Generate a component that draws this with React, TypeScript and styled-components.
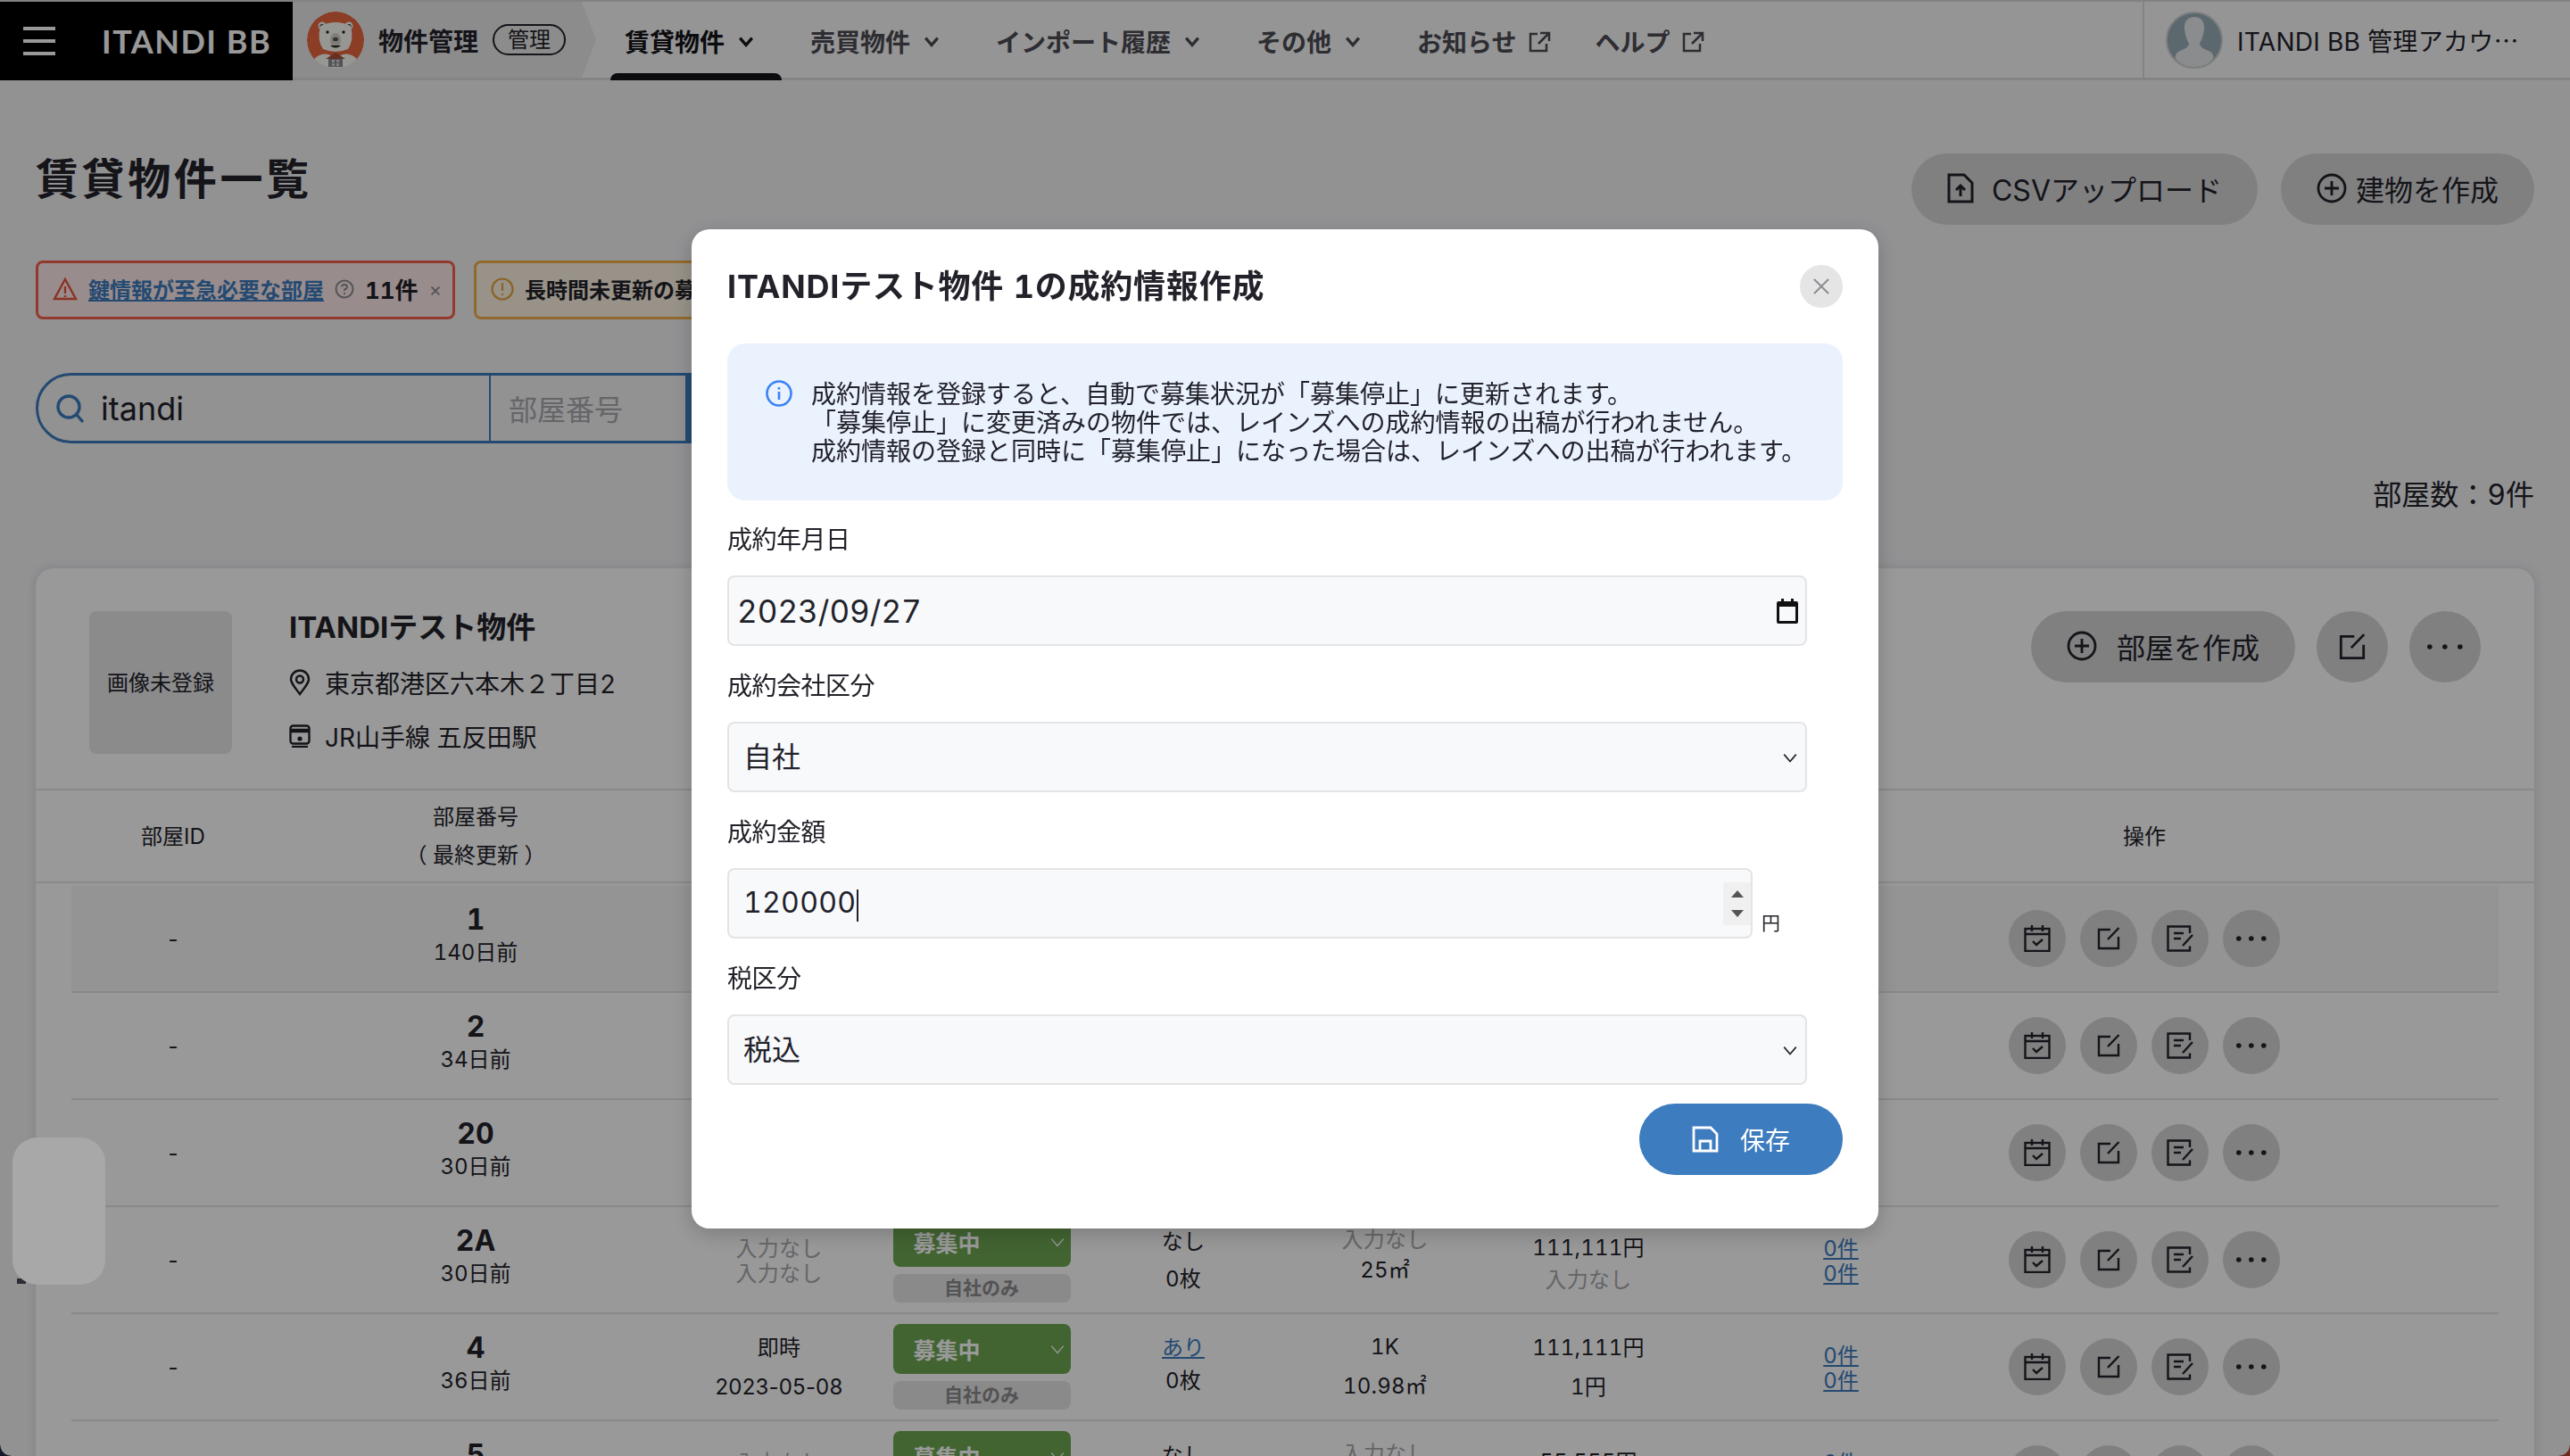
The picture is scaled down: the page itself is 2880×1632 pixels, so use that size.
import React from 'react';
import styled, { createGlobalStyle } from 'styled-components';

const GlobalStyle = createGlobalStyle`
  html, body {
    margin: 0;
    height: 1632px;
    overflow: hidden;
    background: #f3f3f6;
    color: #22222a;
    font-family: 'Inter', 'Noto Sans CJK JP', sans-serif;
    font-variant-numeric: tabular-nums;
  }
  * {
    box-sizing: border-box;
  }
`;

const colors = {
  text: '#22222a',
  blue: '#3c7cbf',
  line: '#e4e4e6',
  button: '#d6d6d8',
  muted: '#a9a9ad',
};

const TopStrip = styled.div`
  height: 2px;
  background: #d9d9d9;
`;

const Header = styled.header`
  display: flex;
  height: 88px;
  background: #f8f8f8;
  border-bottom: 3px solid #dcdcdc;
`;

const LogoBlock = styled.div`
  display: flex;
  align-items: center;
  width: 328px;
  height: 88px;
  padding-left: 26px;
  background: #000;
`;

const Burger = styled.div`
  display: flex;
  flex-direction: column;
  gap: 10px;
  width: 36px;
  margin-right: 52px;
  span {
    height: 4px;
    background: #fff;
  }
`;

const Logo = styled.div`
  font-family: 'Lato', sans-serif;
  font-size: 36px;
  font-weight: 700;
  letter-spacing: 1.5px;
  color: #fff;
  white-space: nowrap;
`;

const ProductBlock = styled.div`
  position: relative;
  display: flex;
  align-items: center;
  gap: 16px;
  width: 340px;
  padding-left: 16px;
  background: #eaeaea;
  clip-path: polygon(0 0, 95.3% 0, 100% 50%, 95.3% 100%, 0 100%);
`;

const ProductName = styled.span`
  font-size: 28px;
  font-weight: 700;
  white-space: nowrap;
`;

const RoleBadge = styled.span`
  display: flex;
  align-items: center;
  justify-content: center;
  width: 82px;
  height: 35px;
  border: 2px solid ${colors.text};
  border-radius: 18px;
  font-size: 24px;
  line-height: 1;
`;

const Nav = styled.nav`
  display: flex;
  flex: 1;
  gap: 16px;
  padding-left: 16px;
`;

const NavItem = styled.div<{ $active?: boolean; $external?: boolean }>`
  position: relative;
  display: flex;
  align-items: center;
  gap: ${(p) => (p.$external ? '13px' : '15px')};
  height: 88px;
  padding: 0 ${(p) => (p.$external ? '18px' : '31px')} 0 16px;
  font-size: 28px;
  font-weight: 700;
  white-space: nowrap;
  color: ${(p) => (p.$active ? '#14141a' : '#4c4c54')};
  ${(p) =>
    p.$active &&
    `
    &::after {
      content: '';
      position: absolute;
      left: 0;
      right: 0;
      bottom: 0;
      height: 8px;
      border-radius: 8px 8px 0 0;
      background: #14141a;
    }
  `}
`;

const Account = styled.div`
  display: flex;
  align-items: center;
  gap: 16px;
  width: 479px;
  padding-left: 24px;
  border-left: 2px solid #dcdcdc;
  font-size: 28px;
  letter-spacing: 0.3px;
  white-space: nowrap;
`;

const CjkEllipsis = styled.span`
  font-family: 'Noto Sans CJK JP', sans-serif;
`;

const Main = styled.main`
  padding: 0 40px;
`;

const TitleRow = styled.div`
  display: flex;
  align-items: center;
  justify-content: space-between;
  height: 80px;
  margin-top: 82px;
`;

const PageTitle = styled.h1`
  margin: 0 0 30px;
  font-size: 48px;
  font-weight: 700;
  letter-spacing: 3.6px;
`;

const TitleActions = styled.div`
  display: flex;
  gap: 26px;
`;

const PillButton = styled.button<{ $gap?: number }>`
  display: flex;
  align-items: center;
  gap: ${(p) => p.$gap ?? 10}px;
  height: 80px;
  padding: 0 40px 3px;
  border: none;
  border-radius: 40px;
  background: ${colors.button};
  color: ${colors.text};
  font-family: inherit;
  font-size: 32px;
  white-space: nowrap;
`;

const RoundButton = styled.button<{ $size: number }>`
  display: flex;
  align-items: center;
  justify-content: center;
  width: ${(p) => p.$size}px;
  height: ${(p) => p.$size}px;
  padding: 0;
  border: none;
  border-radius: 50%;
  background: ${colors.button};
  color: ${colors.text};
`;

const NoticeRow = styled.div`
  display: flex;
  gap: 21px;
  margin-top: 40px;
`;

const Notice = styled.div<{ $tone: 'red' | 'orange' }>`
  display: flex;
  align-items: center;
  gap: 12px;
  height: 66px;
  padding: 0 12px 3px 16px;
  border: 3px solid ${(p) => (p.$tone === 'red' ? '#f4614c' : '#f4b04c')};
  border-radius: 8px;
  background: ${(p) => (p.$tone === 'red' ? '#ffeaea' : '#fdf4e3')};
  font-size: 24px;
  font-weight: 700;
  white-space: nowrap;
`;

const NoticeLink = styled.a`
  color: ${colors.blue};
  text-decoration: underline;
`;

const NoticeCount = styled.span`
  font-size: 26px;
`;

const NoticeClose = styled.span`
  font-size: 22px;
  font-weight: 400;
  color: #8c8c92;
`;

const SearchBar = styled.div`
  display: flex;
  width: 1100px;
  height: 79px;
  margin-top: 60px;
  border: 3px solid ${colors.blue};
  border-radius: 40px 0 0 40px;
  background: #f3f3f6;
`;

const SearchKeyword = styled.div`
  display: flex;
  align-items: center;
  gap: 18px;
  width: 507px;
  padding-left: 19px;
  border-right: 2px solid ${colors.blue};
  font-size: 36px;
`;

const SearchRoom = styled.div`
  display: flex;
  align-items: center;
  width: 218px;
  padding: 0 0 2px 20px;
  font-size: 32px;
  color: ${colors.muted};
`;

const SearchSubmit = styled.div`
  flex: 1;
  background: ${colors.blue};
`;

const RoomCount = styled.div`
  margin-top: 34px;
  font-size: 32px;
  line-height: 48px;
  text-align: right;
`;

const Card = styled.section`
  margin-top: 58px;
  border-radius: 20px 20px 0 0;
  background: #fff;
  box-shadow: 0 0 12px rgba(0, 0, 0, 0.12);
`;

const CardHead = styled.div`
  display: flex;
  align-items: flex-start;
  height: 249px;
  padding: 48px 60px 0 60px;
  border-bottom: 2px solid ${colors.line};
`;

const Thumb = styled.div`
  display: flex;
  align-items: center;
  justify-content: center;
  width: 160px;
  height: 160px;
  margin-right: 64px;
  padding-bottom: 4px;
  border-radius: 8px;
  background: #e8e8ea;
  font-size: 24px;
`;

const BuildingInfo = styled.div`
  flex: 1;
  margin-top: -2px;
`;

const BuildingName = styled.div`
  font-size: 33px;
  font-weight: 700;
  line-height: 40px;
  margin-bottom: 12px;
`;

const InfoLine = styled.div`
  display: flex;
  align-items: center;
  gap: 16px;
  height: 60px;
  font-size: 28px;
`;

const CardActions = styled.div`
  display: flex;
  gap: 24px;
`;

const GridRow = styled.div<{ $head?: boolean; $shade?: boolean }>`
  display: grid;
  grid-template-columns: 226px 452px 228px 226px 226px 226px 230px 336px 344px 1fr;
  align-items: center;
  height: ${(p) => (p.$head ? '104px' : '120px')};
  margin: 0 ${(p) => (p.$head ? '0 3px' : '40px')};
  padding-left: ${(p) => (p.$head ? '41px' : '1px')};
  border-bottom: 2px solid ${colors.line};
  background: ${(p) => (p.$shade ? '#f7f7f7' : 'transparent')};
  text-align: center;
  font-size: 24px;
`;

const HeadCell = styled.div`
  line-height: 43px;
`;

const Stack = styled.div<{ $lh?: number; $shift?: number }>`
  line-height: ${(p) => p.$lh ?? 44}px;
  margin-top: ${(p) => p.$shift ?? 0}px;
`;

const Line = styled.div<{ $muted?: boolean; $date?: boolean }>`
  color: ${(p) => (p.$muted ? colors.muted : 'inherit')};
  letter-spacing: 0.2px;
  font-variant-numeric: ${(p) => (p.$date ? 'normal' : 'tabular-nums')};
`;

const LinkLine = styled.a`
  display: block;
  color: ${colors.blue};
  text-decoration: underline;
`;

const RoomCell = styled.div`
  margin-bottom: 6px;
`;

const RoomNo = styled.div`
  font-size: 32px;
  font-weight: 700;
  line-height: 38px;
`;

const RoomAgo = styled.div`
  line-height: 36px;
`;

const StatusCell = styled.div`
  display: flex;
  flex-direction: column;
  align-items: center;
  gap: 8px;
`;

const StatusSelect = styled.div`
  display: flex;
  align-items: center;
  justify-content: space-between;
  width: 199px;
  height: 56px;
  padding: 0 6px 0 23px;
  border-radius: 8px;
  background: #6ea753;
  color: #fff;
  font-size: 25px;
  font-weight: 700;
`;

const StatusScope = styled.div`
  width: 199px;
  height: 32px;
  border-radius: 8px;
  background: #e6e6e6;
  color: #8a8a8e;
  font-size: 21px;
  font-weight: 700;
  line-height: 32px;
`;

const RowActions = styled.div`
  display: flex;
  justify-content: center;
  gap: 16px;
`;

const Backdrop = styled.div`
  position: fixed;
  inset: 0;
  display: flex;
  justify-content: center;
  padding-top: 257px;
  background: rgba(0, 0, 0, 0.4);
`;

const Modal = styled.div`
  width: 1330px;
  height: 1120px;
  padding: 0 40px;
  border-radius: 20px;
  background: #fff;
  box-shadow: 0 6px 24px rgba(0, 0, 0, 0.2);
`;

const ModalHead = styled.div`
  display: flex;
  align-items: center;
  justify-content: space-between;
  height: 128px;
`;

const ModalTitle = styled.h2`
  margin: 0 0 6px;
  font-size: 36px;
  font-weight: 700;
  letter-spacing: 0.8px;
`;

const CloseButton = styled.button`
  display: flex;
  align-items: center;
  justify-content: center;
  width: 48px;
  height: 48px;
  padding: 0;
  border: none;
  border-radius: 50%;
  background: #e5e5e5;
  color: #8c8c92;
`;

const InfoBox = styled.div`
  display: flex;
  gap: 21px;
  height: 176px;
  margin-bottom: 24px;
  padding: 41px 20px 41px 43px;
  border-radius: 20px;
  background: #eaf2fe;
  font-size: 28px;
  line-height: 32px;
  white-space: nowrap;
`;

const Field = styled.div`
  margin-bottom: 25px;
`;

const Label = styled.label`
  display: block;
  margin-bottom: 20px;
  font-size: 28px;
  line-height: 40px;
  letter-spacing: -0.5px;
`;

const Control = styled.div<{ $pad?: number; $width?: number }>`
  position: relative;
  display: flex;
  align-items: center;
  justify-content: space-between;
  width: ${(p) => p.$width ?? 1210}px;
  height: 79px;
  padding: 0 8px 0 ${(p) => p.$pad ?? 16}px;
  border: 2px solid #e4e4e6;
  border-radius: 8px;
  background: #f8f9fb;
  font-size: 32px;
`;

const SelectValue = styled.span`
  margin-bottom: 6px;
`;

const DateText = styled.span`
  font-size: 35px;
`;

const AmountText = styled.span`
  letter-spacing: 0.3px;
`;

const Caret = styled.span`
  display: inline-block;
  width: 2px;
  height: 36px;
  margin-left: 1px;
  vertical-align: middle;
  background: ${colors.text};
`;

const AmountRow = styled.div`
  display: flex;
  align-items: flex-end;
  gap: 10px;
`;

const Unit = styled.span`
  font-size: 21px;
  line-height: 30px;
  padding-bottom: 2px;
`;

const Spinner = styled.div`
  display: flex;
  flex-direction: column;
  align-items: center;
  justify-content: center;
  gap: 14px;
  width: 31px;
  height: 48px;
  margin-right: -8px;
  background: #f0f0f0;
`;

const Foot = styled.div`
  display: flex;
  justify-content: flex-end;
  margin-top: -4px;
`;

const SaveButton = styled.button`
  display: flex;
  align-items: center;
  justify-content: center;
  gap: 24px;
  width: 228px;
  height: 80px;
  border: none;
  border-radius: 40px;
  background: ${colors.blue};
  color: #fff;
  font-family: inherit;
  font-size: 28px;
`;

const EdgeNub = styled.div`
  position: fixed;
  left: 19px;
  top: 1433px;
  width: 10px;
  height: 6px;
  background: #2c2c34;
`;

const FloatingTab = styled.div`
  position: fixed;
  left: 14px;
  top: 1275px;
  width: 104px;
  height: 165px;
  border-radius: 28px;
  background: #a8a8a8;
`;

const Corner = styled.div<{ $side: 'left' | 'right' }>`
  position: fixed;
  bottom: 0;
  ${(p) => p.$side}: 0;
  width: 12px;
  height: 12px;
  background: radial-gradient(
    circle at ${(p) => (p.$side === 'left' ? '100% 0' : '0 0')},
    transparent 11px,
    ${(p) => (p.$side === 'left' ? '#141828' : '#6e2a20')} 12px
  );
`;

const Chevron = ({ size = 18, width = 3 }: { size?: number; width?: number }) => (
  <svg width={size} height={size} viewBox="0 0 16 16" fill="none" stroke="currentColor" strokeWidth={width}>
    <path d="M2 5l6 7 6-7" />
  </svg>
);

const ExternalIcon = () => (
  <svg width="25" height="25" viewBox="0 0 25 25" fill="none" stroke="#4c4c54" strokeWidth="2.5">
    <path d="M10 4H2v19h18v-8" />
    <path d="M13 3h10v9M23 3L11 15" />
  </svg>
);

const EditIcon = ({ size = 26 }: { size?: number }) => (
  <svg width={size} height={size} viewBox="0 0 26 26" fill="none" stroke="currentColor" strokeWidth="2.4">
    <path d="M15 3H2v21h22V11" />
    <path d="M12 14L24.5 1" />
  </svg>
);

const CalendarCheckIcon = () => (
  <svg width="30" height="30" viewBox="0 0 30 30" fill="none" stroke="currentColor" strokeWidth="2.4">
    <rect x="1.5" y="4" width="27" height="25" />
    <path d="M1.5 10h27M9 0v7M21 0v7" />
    <path d="M10 18l4 4 7-6" />
  </svg>
);

const NoteEditIcon = () => (
  <svg width="30" height="30" viewBox="0 0 30 30" fill="none" stroke="currentColor" strokeWidth="2.4">
    <path d="M26 9V1.5H1.5v27H26v-5" />
    <path d="M8 9h11M8 15h8M18 23L29 11" />
  </svg>
);

const DotsIcon = ({ gap = 14, r = 2.8 }: { gap?: number; r?: number }) => (
  <svg width={gap * 2 + r * 2 + 2} height="12" viewBox={`0 0 ${gap * 2 + r * 2 + 2} 12`} fill="currentColor">
    <circle cx={r + 1} cy="6" r={r} />
    <circle cx={r + 1 + gap} cy="6" r={r} />
    <circle cx={r + 1 + gap * 2} cy="6" r={r} />
  </svg>
);

const PlusCircleIcon = ({ size = 34 }: { size?: number }) => (
  <svg width={size} height={size} viewBox="0 0 34 34" fill="none" stroke="currentColor" strokeWidth="2.8">
    <circle cx="17" cy="17" r="15" />
    <path d="M17 9v16M9 17h16" />
  </svg>
);

const BearAvatar = () => (
  <svg width="64" height="64" viewBox="0 0 64 64">
    <defs>
      <clipPath id="bear-clip">
        <circle cx="32" cy="32" r="32" />
      </clipPath>
    </defs>
    <g clipPath="url(#bear-clip)">
      <circle cx="32" cy="32" r="32" fill="#e8663f" />
      <circle cx="17" cy="16" r="4.5" fill="#fbfbf5" />
      <circle cx="47" cy="16" r="4.5" fill="#fbfbf5" />
      <circle cx="17" cy="16.5" r="2.6" fill="#222" />
      <circle cx="47" cy="16.5" r="2.6" fill="#222" />
      <path d="M15 16Q32 8 49 16Q53 32 46 42Q32 48 18 42Q11 32 15 16Z" fill="#fbfbf5" />
      <path d="M9 52Q16 46 24 48L32 52L40 48Q48 46 55 52L60 64H4Z" fill="#fbfbf5" />
      <circle cx="23" cy="23" r="1.7" fill="#222" />
      <circle cx="41" cy="23" r="1.7" fill="#222" />
      <ellipse cx="32" cy="32" rx="6" ry="8" fill="#d6d3c9" />
      <ellipse cx="32" cy="31" rx="3" ry="2.2" fill="#555" />
      <path d="M26 38Q32 43 38 38Z" fill="#222" />
      <path d="M21 53L32 46L43 53H40V62H24V53Z" fill="#a8503a" />
      <rect x="24" y="53" width="16" height="9" fill="#8c8c90" />
      <path d="M28 54h3v3h-3zM33 54h3v3h-3zM28 58h3v3h-3zM33 58h3v3h-3z" fill="#d6d6da" />
    </g>
  </svg>
);

const ProfileAvatar = () => (
  <svg width="64" height="64" viewBox="0 0 64 64">
    <circle cx="32" cy="32" r="31" fill="#98adb8" stroke="#cfd2d4" strokeWidth="2" />
    <path
      d="M32 6C24 6 20 12 21 20C22 28 24 32 26 36C25 41 20 42 14 45C11 47 10 50 11 53C16 59 24 62 32 62C40 62 48 59 53 53C54 50 53 47 50 45C44 42 39 41 38 36C40 32 42 28 43 20C44 12 40 6 32 6Z"
      fill="#e6e9eb"
    />
  </svg>
);

const SearchIcon = () => (
  <svg width="33" height="33" viewBox="0 0 33 33" fill="none" stroke={colors.blue} strokeWidth="3.4">
    <circle cx="15" cy="15" r="12" />
    <path d="M24 24l7 8" />
  </svg>
);

const rooms = [
  { no: '1', ago: '140日前', shade: true, avail: ['入力なし', '入力なし'], keys: ['なし', '0枚'], area: ['1K', '25㎡'], rent: ['111,111円', '入力なし'] },
  { no: '2', ago: '34日前', avail: ['入力なし', '入力なし'], keys: ['なし', '0枚'], area: ['1K', '25㎡'], rent: ['111,111円', '入力なし'] },
  { no: '20', ago: '30日前', avail: ['入力なし', '入力なし'], keys: ['なし', '0枚'], area: ['1K', '25㎡'], rent: ['111,111円', '入力なし'] },
  { no: '2A', ago: '30日前', avail: ['入力なし', '入力なし'], keys: ['なし', '0枚'], area: ['入力なし', '25㎡'], rent: ['111,111円', '入力なし'] },
  { no: '4', ago: '36日前', avail: ['即時', '2023-05-08'], keys: ['あり', '0枚'], area: ['1K', '10.98㎡'], rent: ['111,111円', '1円'] },
  { no: '5', ago: '30日前', avail: ['入力なし', '入力なし'], keys: ['なし', '0枚'], area: ['入力なし', '25㎡'], rent: ['55,555円', '入力なし'] },
];

const isEmpty = (v: string) => v === '入力なし';

const App: React.FC = () => {
  return (
    <>
      <GlobalStyle />
      <TopStrip />
      <Header>
        <LogoBlock>
          <Burger>
            <span />
            <span />
            <span />
          </Burger>
          <Logo>ITANDI BB</Logo>
        </LogoBlock>
        <ProductBlock>
          <BearAvatar />
          <ProductName>物件管理</ProductName>
          <RoleBadge>管理</RoleBadge>
        </ProductBlock>
        <Nav>
          <NavItem $active>
            賃貸物件
            <Chevron />
          </NavItem>
          <NavItem>
            売買物件
            <Chevron />
          </NavItem>
          <NavItem>
            インポート履歴
            <Chevron />
          </NavItem>
          <NavItem>
            その他
            <Chevron />
          </NavItem>
          <NavItem $external>
            お知らせ
            <ExternalIcon />
          </NavItem>
          <NavItem $external>
            ヘルプ
            <ExternalIcon />
          </NavItem>
        </Nav>
        <Account>
          <ProfileAvatar />
          <span>
            ITANDI BB 管理アカウ<CjkEllipsis>…</CjkEllipsis>
          </span>
        </Account>
      </Header>

      <Main>
        <TitleRow>
          <PageTitle>賃貸物件一覧</PageTitle>
          <TitleActions>
            <PillButton $gap={20}>
              <svg width="30" height="34" viewBox="0 0 30 34" fill="none" stroke="currentColor" strokeWidth="3">
                <path d="M2 2h17l9 9v21H2z" />
                <path d="M15 26V14M10 19l5-5 5 5" />
              </svg>
              CSVアップロード
            </PillButton>
            <PillButton>
              <PlusCircleIcon />
              建物を作成
            </PillButton>
          </TitleActions>
        </TitleRow>

        <NoticeRow>
          <Notice $tone="red">
            <svg width="28" height="28" viewBox="0 0 28 28" fill="none" stroke="#e8533f" strokeWidth="2.4">
              <path d="M14 3L26 25H2Z" />
              <path d="M14 11v8M14 21v2" />
            </svg>
            <NoticeLink>鍵情報が至急必要な部屋</NoticeLink>
            <svg width="22" height="22" viewBox="0 0 22 22" fill="none" stroke="#8c8c92" strokeWidth="2">
              <circle cx="11" cy="11" r="9.5" />
              <path d="M8 8.5Q8 6 11 6Q14 6 14 8.5Q14 10.5 11 11.5V13M11 15v2" />
            </svg>
            <NoticeCount>11件</NoticeCount>
            <NoticeClose>×</NoticeClose>
          </Notice>
          <Notice $tone="orange">
            <svg width="26" height="32" viewBox="0 0 26 26" fill="none" stroke="#e8a53f" strokeWidth="2.2">
              <circle cx="13" cy="13" r="11.5" />
              <path d="M13 6v9M13 18v2" />
            </svg>
            長時間未更新の募集中の部屋
          </Notice>
        </NoticeRow>

        <SearchBar>
          <SearchKeyword>
            <SearchIcon />
            itandi
          </SearchKeyword>
          <SearchRoom>部屋番号</SearchRoom>
          <SearchSubmit />
        </SearchBar>

        <RoomCount>部屋数：9件</RoomCount>

        <Card>
          <CardHead>
            <Thumb>画像未登録</Thumb>
            <BuildingInfo>
              <BuildingName>ITANDIテスト物件</BuildingName>
              <InfoLine>
                <svg width="24" height="30" viewBox="0 0 24 30" fill="none" stroke="currentColor" strokeWidth="2.4">
                  <path d="M12 28C5 19 2 15 2 11.5A10 10 0 0 1 22 11.5C22 15 19 19 12 28Z" />
                  <circle cx="12" cy="11.5" r="4" />
                </svg>
                東京都港区六本木２丁目2
              </InfoLine>
              <InfoLine>
                <svg width="24" height="26" viewBox="0 0 24 26" fill="none" stroke="currentColor" strokeWidth="2.4">
                  <rect x="1.5" y="1.5" width="21" height="20" rx="3" />
                  <path d="M1.5 8h21M1.5 6h21" />
                  <path d="M3 25h18" />
                  <circle cx="12" cy="16" r="1.4" fill="currentColor" />
                </svg>
                JR山手線 五反田駅
              </InfoLine>
            </BuildingInfo>
            <CardActions>
              <PillButton $gap={22}>
                <PlusCircleIcon />
                部屋を作成
              </PillButton>
              <RoundButton $size={80}>
                <EditIcon size={30} />
              </RoundButton>
              <RoundButton $size={80}>
                <DotsIcon gap={17} />
              </RoundButton>
            </CardActions>
          </CardHead>

          <GridRow $head>
            <HeadCell>部屋ID</HeadCell>
            <HeadCell>
              部屋番号
              <br />（ 最終更新 ）
            </HeadCell>
            <HeadCell>入居可能日</HeadCell>
            <HeadCell>募集状況</HeadCell>
            <HeadCell>鍵</HeadCell>
            <HeadCell>間取り</HeadCell>
            <HeadCell>賃料</HeadCell>
            <HeadCell>申込</HeadCell>
            <HeadCell>操作</HeadCell>
          </GridRow>

          {rooms.map((room) => (
            <GridRow key={room.no} $shade={room.shade}>
              <div>-</div>
              <RoomCell>
                <RoomNo>{room.no}</RoomNo>
                <RoomAgo>{room.ago}</RoomAgo>
              </RoomCell>
              <Stack $lh={isEmpty(room.avail[0]) ? 28 : 44} $shift={isEmpty(room.avail[0]) ? 4 : 1}>
                {room.avail.map((v, i) => (
                  <Line key={i} $muted={isEmpty(v)} $date={v.includes('-')}>
                    {v}
                  </Line>
                ))}
              </Stack>
              <StatusCell>
                <StatusSelect>
                  募集中
                  <Chevron size={18} width={1.2} />
                </StatusSelect>
                <StatusScope>自社のみ</StatusScope>
              </StatusCell>
              <Stack $lh={room.keys[0] === 'あり' ? 37 : 42} $shift={room.keys[0] === 'あり' ? -6 : 1}>
                {room.keys[0] === 'あり' ? <LinkLine>あり</LinkLine> : <Line>{room.keys[0]}</Line>}
                <Line>{room.keys[1]}</Line>
              </Stack>
              <Stack $lh={isEmpty(room.area[0]) ? 34 : 44} $shift={isEmpty(room.area[0]) ? -11 : 0}>
                {room.area.map((v, i) => (
                  <Line key={i} $muted={isEmpty(v)}>
                    {v}
                  </Line>
                ))}
              </Stack>
              <Stack $lh={isEmpty(room.rent[1]) ? 36 : 44} $shift={isEmpty(room.rent[1]) ? 9 : 2}>
                {room.rent.map((v, i) => (
                  <Line key={i} $muted={isEmpty(v)}>
                    {v}
                  </Line>
                ))}
              </Stack>
              <Stack $lh={28} $shift={4}>
                <LinkLine>0件</LinkLine>
                <LinkLine>0件</LinkLine>
              </Stack>
              <RowActions>
                <RoundButton $size={64}>
                  <CalendarCheckIcon />
                </RoundButton>
                <RoundButton $size={64}>
                  <EditIcon />
                </RoundButton>
                <RoundButton $size={64}>
                  <NoteEditIcon />
                </RoundButton>
                <RoundButton $size={64}>
                  <DotsIcon />
                </RoundButton>
              </RowActions>
            </GridRow>
          ))}
        </Card>
      </Main>

      <Backdrop>
        <Modal>
          <ModalHead>
            <ModalTitle>ITANDIテスト物件 1の成約情報作成</ModalTitle>
            <CloseButton>
              <svg width="20" height="20" viewBox="0 0 20 20" fill="none" stroke="currentColor" strokeWidth="2">
                <path d="M2 2l16 16M18 2L2 18" />
              </svg>
            </CloseButton>
          </ModalHead>

          <InfoBox>
            <svg width="30" height="30" viewBox="0 0 30 30" fill="none" stroke="#3b82f6" strokeWidth="2.6" style={{ flexShrink: 0 }}>
              <circle cx="15" cy="15" r="13.5" />
              <path d="M15 13v9M15 8v2.6" />
            </svg>
            <div>
              成約情報を登録すると、自動で募集状況が「募集停止」に更新されます。
              <br />
              「募集停止」に変更済みの物件では、レインズへの成約情報の出稿が行われません。
              <br />
              成約情報の登録と同時に「募集停止」になった場合は、レインズへの出稿が行われます。
            </div>
          </InfoBox>

          <Field>
            <Label>成約年月日</Label>
            <Control $pad={9}>
              <DateText>2023/09/27</DateText>
              <svg width="24" height="28" viewBox="0 0 24 28" fill="#111">
                <path d="M5 0h3v3h8V0h3v3h3a2 2 0 0 1 2 2v21a2 2 0 0 1-2 2H2a2 2 0 0 1-2-2V5a2 2 0 0 1 2-2h3zM3 9v16h18V9z" />
              </svg>
            </Control>
          </Field>

          <Field>
            <Label>成約会社区分</Label>
            <Control>
              <SelectValue>自社</SelectValue>
              <Chevron size={18} width={1.5} />
            </Control>
          </Field>

          <Field>
            <Label>成約金額</Label>
            <AmountRow>
              <Control $width={1149}>
                <AmountText>
                  120000
                  <Caret />
                </AmountText>
                <Spinner>
                  <svg width="14" height="8" viewBox="0 0 14 10" preserveAspectRatio="none" fill="#555">
                    <path d="M7 0l7 10H0z" />
                  </svg>
                  <svg width="14" height="8" viewBox="0 0 14 10" preserveAspectRatio="none" fill="#555">
                    <path d="M7 10L0 0h14z" />
                  </svg>
                </Spinner>
              </Control>
              <Unit>円</Unit>
            </AmountRow>
          </Field>

          <Field>
            <Label>税区分</Label>
            <Control>
              <SelectValue>税込</SelectValue>
              <Chevron size={18} width={1.5} />
            </Control>
          </Field>

          <Foot>
            <SaveButton>
              <svg width="30" height="30" viewBox="0 0 30 30" fill="none" stroke="currentColor" strokeWidth="2.8">
                <path d="M2 2h19l7 7v19H2z" />
                <path d="M9 28V17h12v11" />
              </svg>
              保存
            </SaveButton>
          </Foot>
        </Modal>
      </Backdrop>

      <EdgeNub />
      <FloatingTab />
      <Corner $side="left" />
      <Corner $side="right" />
    </>
  );
};

export default App;
